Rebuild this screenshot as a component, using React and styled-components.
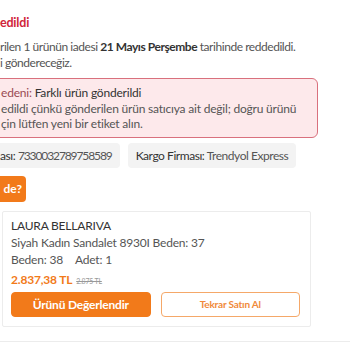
import React from "react";
import styled, { createGlobalStyle } from "styled-components";

const GlobalStyle = createGlobalStyle`
  body {
    margin: 0;
    background: #fff;
    font-family: "Lato", "Liberation Sans", sans-serif;
    overflow: hidden;
  }
`;

const ORANGE = "#f27a1a";

const Wrapper = styled.div`
  width: 350px;
  height: 350px;
  overflow: hidden;
`;

const Content = styled.div`
  margin-left: -16px;
  width: 334px;
  padding-top: 15px;
  display: flex;
  flex-direction: column;
  letter-spacing: -0.2px;
`;

const Inset = styled.div`
  padding-left: 16px;
`;

const Title = styled.div`
  font-size: 12.5px;
  font-weight: 700;
  color: #d0263a;
  line-height: 16px;
`;

const Paragraph = styled.p`
  margin: 8px 0 0;
  font-size: 12px;
  line-height: 16px;
  color: #555;
  white-space: nowrap;
  letter-spacing: -0.45px;
  b {
    color: #333;
    font-weight: 700;
  }
`;

const ReasonBox = styled.div`
  margin-top: 7px;
  border: 1px solid #d9707d;
  background: #fde9eb;
  border-radius: 6px;
  padding: 6px 0 5px 16px;
  font-size: 12px;
  line-height: 15.5px;
  color: #555;
  white-space: nowrap;
`;

const ReasonLabel = styled.span`
  color: #9a4a52;
`;

const ReasonValue = styled.span`
  color: #333;
`;

const ChipRow = styled.div`
  margin-top: 5px;
  display: flex;
  gap: 8px;
`;

const Chip = styled.div`
  height: 25px;
  display: flex;
  align-items: center;
  background: #f3f3f3;
  border-radius: 4px;
  padding: 0 8px 0 ${(p) => (p.$first ? "16px" : "8px")};
  font-size: 12px;
  color: #555;
  white-space: nowrap;
  letter-spacing: -0.45px;
  b {
    font-weight: 400;
    color: #333;
  }
`;

const Digits = styled.span`
  letter-spacing: -1.1px;
`;

const WhereButton = styled.button`
  margin-top: 8px;
  align-self: flex-start;
  height: 26px;
  width: 42px;
  border: none;
  border-radius: 4px;
  background: ${ORANGE};
  color: #fff;
  font-family: inherit;
  font-weight: 700;
  font-size: 12px;
  text-align: right;
  padding: 0 4px 0 0;
`;

const Card = styled.div`
  margin-top: 9px;
  margin-left: 18px;
  width: 309px;
  box-sizing: border-box;
  border: 1px solid #ececec;
  border-radius: 2px;
  padding: 5px 10px 9px 8px;
  display: flex;
  flex-direction: column;
`;

const Brand = styled.div`
  font-size: 12px;
  line-height: 17px;
  color: #333;
`;

const Line = styled.div`
  font-size: 12px;
  line-height: 17px;
  color: #555;
  display: flex;
  gap: 12px;
`;

const PriceRow = styled.div`
  margin-top: 4px;
  display: flex;
  align-items: baseline;
  gap: 4px;
`;

const Price = styled.span`
  font-size: 12px;
  font-weight: 700;
  color: ${ORANGE};
`;

const OldPrice = styled.span`
  font-size: 7px;
  color: #999;
  text-decoration: line-through;
`;

const ButtonRow = styled.div`
  margin-top: 5px;
  display: grid;
  grid-template-columns: 1fr 1fr;
  gap: 10px;
`;

const ActionButton = styled.button`
  height: 25px;
  border-radius: 4px;
  font-family: inherit;
  font-weight: 700;
  letter-spacing: -0.2px;
  border: 1px solid ${(p) => (p.$primary ? ORANGE : "#f5a869")};
  background: ${(p) => (p.$primary ? ORANGE : "#fff")};
  color: ${(p) => (p.$primary ? "#fff" : "#f08a3a")};
  font-size: ${(p) => (p.$primary ? "12px" : "10px")};
`;

const BottomRule = styled.div`
  margin-top: 14px;
  margin-left: 16px;
  width: 350px;
  height: 1px;
  background: #ececec;
`;

export default function App() {
  return (
    <Wrapper>
      <GlobalStyle />
      <Content>
        <Inset>
          <Title>edildi</Title>
          <Paragraph>
            rilen 1 ürünün iadesi <b>21 Mayıs Perşembe</b> tarihinde reddedildi.
            <br />i göndereceğiz.
          </Paragraph>
        </Inset>
        <ReasonBox>
          <ReasonLabel>edeni: </ReasonLabel>
          <ReasonValue>Farklı ürün gönderildi</ReasonValue>
          <br />
          edildi çünkü gönderilen ürün satıcıya ait değil; doğru ürünü
          <br />
          çin lütfen yeni bir etiket alın.
        </ReasonBox>
        <ChipRow>
          <Chip $first>
            <b>ası:</b>&nbsp;<Digits>7330032789758589</Digits>
          </Chip>
          <Chip>
            <b>Kargo Firması:</b>&nbsp;Trendyol Express
          </Chip>
        </ChipRow>
        <WhereButton>de?</WhereButton>
        <Card>
          <Brand>LAURA BELLARIVA</Brand>
          <Line>Siyah Kadın Sandalet 8930I Beden: 37</Line>
          <Line>
            <span>Beden: 38</span>
            <span>Adet: 1</span>
          </Line>
          <PriceRow>
            <Price>2.837,38 TL</Price>
            <OldPrice>2.875 TL</OldPrice>
          </PriceRow>
          <ButtonRow>
            <ActionButton $primary>Ürünü Değerlendir</ActionButton>
            <ActionButton>Tekrar Satın Al</ActionButton>
          </ButtonRow>
        </Card>
        <BottomRule />
      </Content>
    </Wrapper>
  );
}
